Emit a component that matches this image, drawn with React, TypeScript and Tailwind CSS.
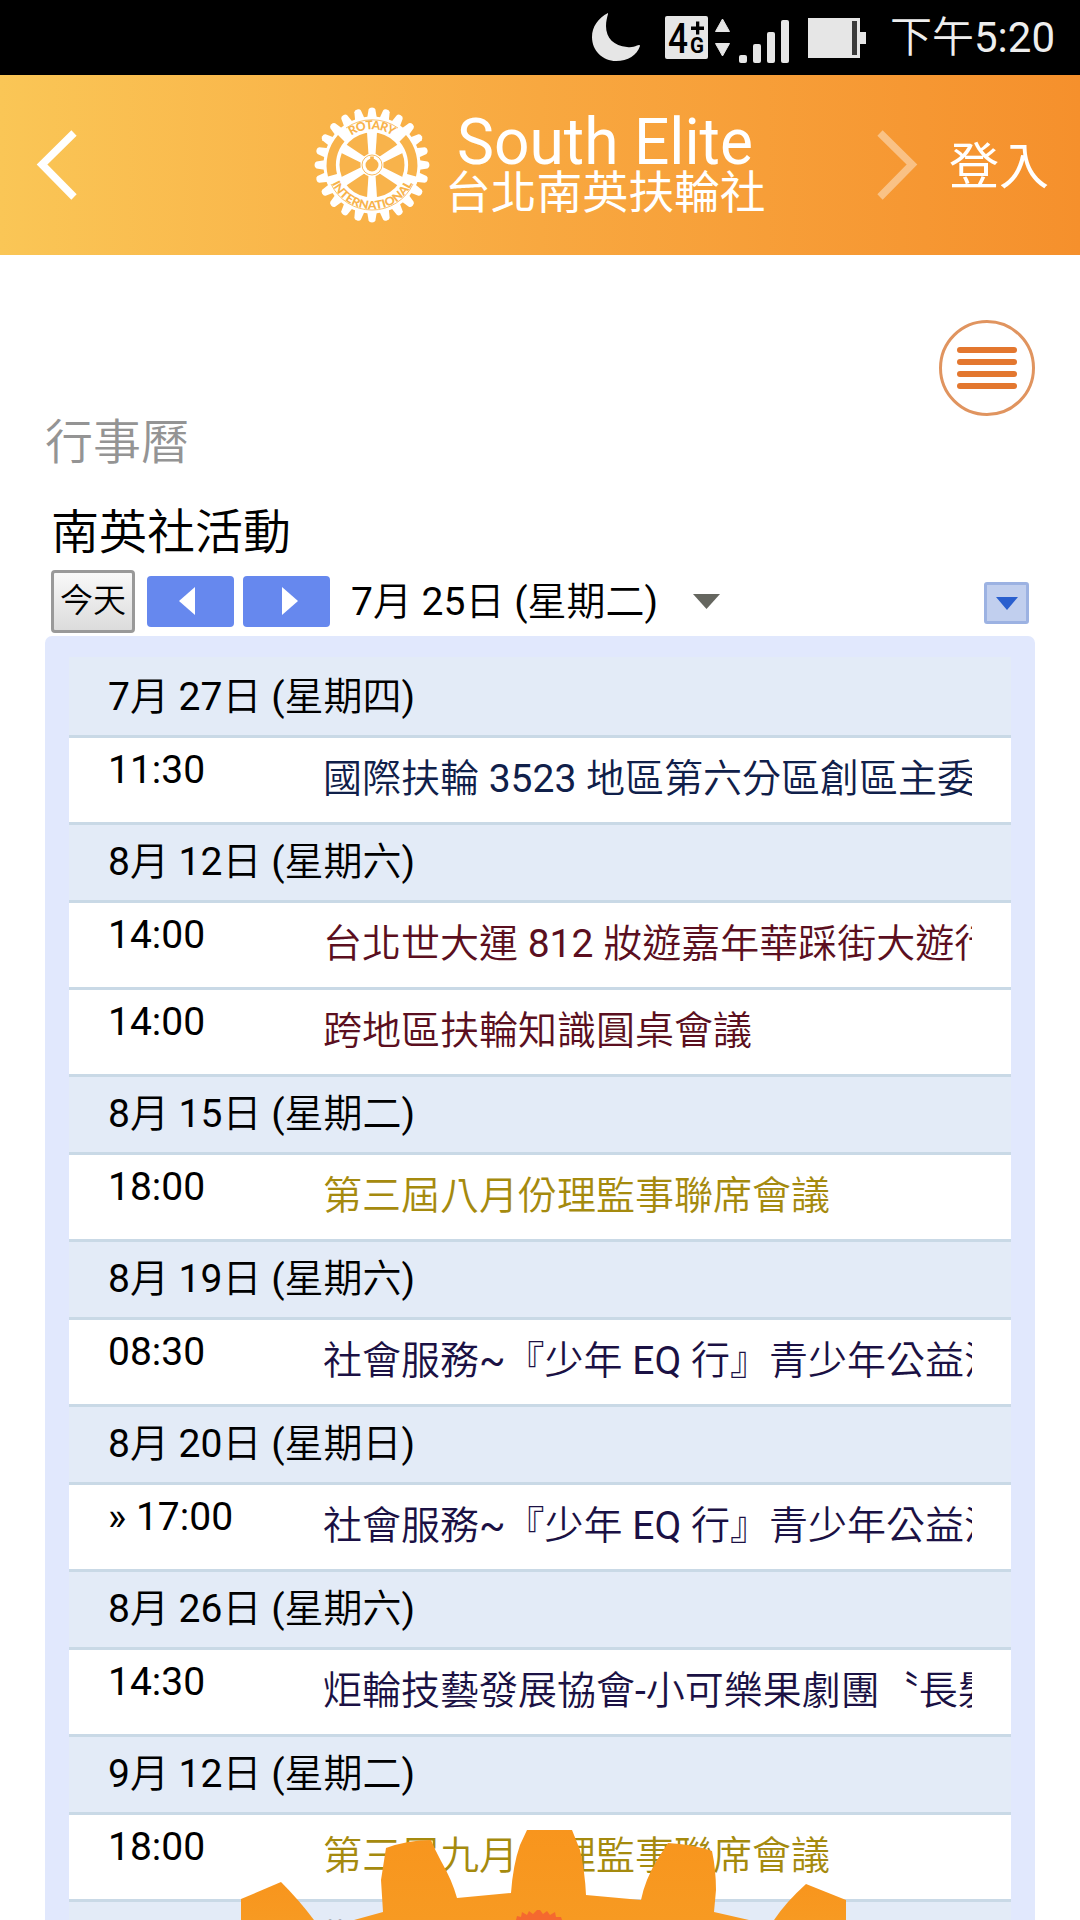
import React from "react";

const cjk = "font-['Roboto','Noto_Sans_CJK_TC',sans-serif]";

type Row = { day: string } | { time: string; title: string; color: string };

const navy = "text-[#10204a]";
const wine = "text-[#5b0f20]";
const gold = "text-[#a58a0e]";
const indigo = "text-[#1b1144]";

const rows: Row[] = [
  { day: "7月 27日 (星期四)" },
  { time: "11:30", title: "國際扶輪 3523 地區第六分區創區主委", color: navy },
  { day: "8月 12日 (星期六)" },
  { time: "14:00", title: "台北世大運 812 妝遊嘉年華踩街大遊行", color: wine },
  { time: "14:00", title: "跨地區扶輪知識圓桌會議", color: wine },
  { day: "8月 15日 (星期二)" },
  { time: "18:00", title: "第三屆八月份理監事聯席會議", color: gold },
  { day: "8月 19日 (星期六)" },
  { time: "08:30", title: "社會服務~『少年 EQ 行』青少年公益活動", color: indigo },
  { day: "8月 20日 (星期日)" },
  { time: "» 17:00", title: "社會服務~『少年 EQ 行』青少年公益活動", color: indigo },
  { day: "8月 26日 (星期六)" },
  { time: "14:30", title: "炬輪技藝發展協會-小可樂果劇團〝長髮", color: indigo },
  { day: "9月 12日 (星期二)" },
  { time: "18:00", title: "第三屆九月份理監事聯席會議", color: gold },
  { day: "9月 16日 (星期六)" },
];

/** Sets Chinese characters in the demi-light weight and Latin ones in regular. */
function Mixed({ text }: { text: string }) {
  return (
    <>
      {text.split(/([^\x00-\x7f]+)/).map((part, i) =>
        i % 2 ? (
          <span key={i} className="font-[350]">{part}</span>
        ) : (
          part
        )
      )}
    </>
  );
}

function StatusBar() {
  return (
    <div className="flex h-[75px] items-center bg-black pl-[590px]">
      <svg width="290" height="75" viewBox="590 0 290 75" className="shrink-0" fill="#e6e6e6">
        <path d="M608 13C598 18 592 27 592 37C592 51 603 61 616 61C628 61 637 55 640 46C640 45 639 44.500 637 45.500C634 47 631 47.500 627 47C614 46 606 38 606 26C606 21 607 18 608 14Z" />
        <rect x="665" y="16" width="43" height="43" rx="2" />
        <text x="668" y="53" fontFamily="Roboto" fontSize="43" fontWeight="500" fill="#000" textLength="20" lengthAdjust="spacingAndGlyphs">4</text>
        <text x="690" y="53" fontFamily="Roboto" fontSize="22" fontWeight="700" fill="#000" textLength="14" lengthAdjust="spacingAndGlyphs">G</text>
        <path d="M691 26.500h13v3.500h-13zM696 21.500h3.300v13h-3.300z" fill="#000" />
        <path d="M722.500 19L729.500 31.500H715.500ZM722.500 56L729.500 43.500H715.500Z" stroke="#e6e6e6" strokeWidth="1" strokeLinejoin="round" />
        <rect x="739" y="55" width="8" height="8" rx="2" />
        <rect x="753" y="44" width="8" height="19" rx="2" />
        <rect x="767" y="32" width="8" height="31" rx="2" />
        <rect x="781" y="20" width="8" height="43" rx="2" />
        <path d="M808 18h52v14h6v12h-6v14h-52z" />
        <rect x="852" y="21" width="5" height="34" fill="#3a3a3a" />
      </svg>
      <span className="ml-[10px] whitespace-nowrap text-[42px] leading-[75px] text-[#eeeeee]"><Mixed text="下午5:20" /></span>
    </div>
  );
}

function RotaryWheel() {
  const teeth = Array.from({ length: 24 }, (_, i) => i * 15);
  const spokes = [0, 60, 120, 180, 240, 300];
  const o = "#f8b34b";
  return (
    <svg width="116" height="116" viewBox="-58 -58 116 116" className="shrink-0">
      <circle r="48.500" fill="#fff" />
      {teeth.map((a) => (
        <path key={a} d="M-5 -46L-3.400 -55.500Q-2.800 -57.500 0 -57.500Q2.800 -57.500 3.400 -55.500L5 -46Z" fill="#fff" transform={`rotate(${a})`} />
      ))}
      <path d="M-34 -30A45.500 45.500 0 0 0 -44 11.500L-35 9A36.300 36.300 0 0 1 -27.500 -23.500Z" fill={o} />
      <path d="M34 -30A45.500 45.500 0 0 1 44 11.500L35 9A36.300 36.300 0 0 0 27.500 -23.500Z" fill={o} />
      <path d="M-26 -37A45.300 45.300 0 0 1 26 -37" fill="none" stroke={o} strokeWidth=".8" />
      <path d="M-41 19A45.300 45.300 0 0 0 41 19" fill="none" stroke={o} strokeWidth=".8" />
      <circle r="32.500" fill={o} />
      {spokes.map((a) => (
        <path key={a} d="M-3.500 -10L-5 -33H5L3.500 -10Z" fill="#fff" transform={`rotate(${a})`} />
      ))}
      <circle r="11.500" fill="#fff" />
      <circle r="10" fill="none" stroke={o} strokeWidth=".9" />
      <circle r="6.500" fill={o} />
      <path d="M-1.800 -8.500h3.600v3h-3.600z" fill={o} />
      <defs>
        <path id="arc-top" d="M-35.800 0A35.800 35.800 0 0 1 35.800 0" />
        <path id="arc-bottom" d="M-44.300 0A44.300 44.300 0 0 0 44.300 0" />
      </defs>
      <text fill={o} fontFamily="Lato" fontWeight="900" fontSize="12" textAnchor="middle">
        <textPath href="#arc-top" startOffset="50%" textLength="44">ROTARY</textPath>
      </text>
      <text fill={o} fontFamily="Lato" fontWeight="900" fontSize="11.500" textAnchor="middle">
        <textPath href="#arc-bottom" startOffset="50%" textLength="101" lengthAdjust="spacingAndGlyphs">INTERNATIONAL</textPath>
      </text>
    </svg>
  );
}

function Header() {
  return (
    <header className="flex h-[180px] items-center bg-gradient-to-r from-[#fac656] via-[#f8a840] to-[#f5902c] text-white">
      <svg width="44" height="72" viewBox="0 0 44 72" className="ml-[34px] shrink-0">
        <path d="M40 4L8 35.500L40 68" fill="none" stroke="#fff" strokeWidth="7.500" />
      </svg>
      <div className="ml-[236px] flex items-center">
        <RotaryWheel />
        <div className="ml-[15px] flex w-[322px] flex-col">
          <svg width="320" height="58" viewBox="0 0 320 58">
            <text x="12" y="52.500" fontFamily="Roboto" fontSize="64" fill="#fff" textLength="296" lengthAdjust="spacingAndGlyphs">South Elite</text>
          </svg>
          <div className="h-[50px] whitespace-nowrap text-[45.800px] leading-[50px]">台北南英扶輪社</div>
        </div>
      </div>
      <svg width="44" height="72" viewBox="0 0 44 72" className="ml-[108px] shrink-0 opacity-40">
        <path d="M5 4L37 35.500L5 68" fill="none" stroke="#fff" strokeWidth="7.500" />
      </svg>
      <div className="ml-[30px] whitespace-nowrap pt-1 text-[50px] leading-[60px]">登入</div>
    </header>
  );
}

function CalendarToolbar() {
  return (
    <div className="flex h-[68px] items-center pb-[2px] pl-[51px] pr-[51px] text-black">
      <button className="h-[63px] w-[84px] shrink-0 whitespace-nowrap rounded-[4px] border-[3px] border-[#999] bg-gradient-to-b from-[#f8f8f8] to-[#dcdcdc] text-[33px] font-[350] leading-[50px]">今天</button>
      <button className="ml-3 flex h-[51px] w-[87px] shrink-0 items-center justify-center rounded-[4px] bg-[#6688ee]">
        <svg width="16" height="28" viewBox="0 0 16 28" className="mr-[7px]"><path d="M16 0V28L0 14Z" fill="#fff" /></svg>
      </button>
      <button className="ml-[9px] flex h-[51px] w-[87px] shrink-0 items-center justify-center rounded-[4px] bg-[#6688ee]">
        <svg width="16" height="28" viewBox="0 0 16 28" className="ml-[6px]"><path d="M0 0V28L16 14Z" fill="#fff" /></svg>
      </button>
      <span className="ml-[21px] whitespace-nowrap pt-[2px] text-[39px] leading-[60px]"><Mixed text="7月 25日 (星期二)" /></span>
      <svg width="27" height="15" viewBox="0 0 27 15" className="ml-[35px] shrink-0"><path d="M0 0H27L13.500 15Z" fill="#65665f" /></svg>
      <button className="ml-auto mt-[4px] flex h-[42px] w-[45px] items-center justify-center rounded-[3px] border-[3px] border-[#9cb2e2] bg-[#c1cfee]">
        <svg width="22" height="13" viewBox="0 0 22 13"><path d="M0 0H22L11 13Z" fill="#2a5fce" /></svg>
      </button>
    </div>
  );
}

function Agenda() {
  return (
    <div className="h-[1284px] overflow-hidden rounded-t-[7px] bg-[#e1e8fd] px-6 pt-[21px]">
      {rows.map((r, i) =>
        "day" in r ? (
          <div key={i} className="h-[78px] border-t-[3px] border-[#c9d9e6] bg-[#e3ebf7] pl-[39px] text-[39px] leading-[74px] text-black first:border-[#e3ebf7]">
            <Mixed text={r.day} />
          </div>
        ) : (
          <div key={i} className="flex h-[87px] border-t-[3px] border-[#c9d9e6] bg-white pl-[39px] text-[39px]">
            <div className="w-[215px] shrink-0 whitespace-nowrap leading-[64px] text-black">{r.time}</div>
            <div className={`w-[649px] overflow-hidden whitespace-nowrap leading-[83px] ${r.color}`}><Mixed text={r.title} /></div>
          </div>
        )
      )}
    </div>
  );
}

function GearButton() {
  return (
    <svg width="620" height="96" viewBox="235 1824 620 96" className="absolute bottom-0 left-[235px]">
      <defs>
        <linearGradient id="gear" x1="0" y1="0" x2="0" y2="1">
          <stop offset="0" stopColor="#f8951d" />
          <stop offset="1" stopColor="#f79a22" />
        </linearGradient>
      </defs>
      <g fill="url(#gear)">
        <path d="M354 1920L383 1912L381 1880L386 1848Q408 1840 431 1840Q435 1850 441 1861Q452 1880 457 1898L511 1893Q513 1865 520 1845L527 1830H572L580 1850Q585 1872 586 1895L641 1900Q645 1880 657 1860L668 1843Q692 1844 712 1851Q716 1870 716 1890L714 1912L749 1920Z" />
        <path d="M241 1920V1899L281 1882Q299 1900 314 1920Z" />
        <path d="M846 1920V1900L806 1884Q786 1902 774 1920Z" />
      </g>
      <path d="M516 1920L517 1916L521 1917L522 1912L527 1915L529 1911L533 1914L537 1910L540 1910L543 1914L547 1911L550 1915L555 1912L556 1917L561 1917L562 1920Z" fill="#f5692f" />
    </svg>
  );
}

export default function App() {
  return (
    <div className={`relative h-[1920px] w-[1080px] overflow-hidden bg-white ${cjk}`}>
      <StatusBar />
      <Header />
      <main>
        <div className="flex h-[164px] justify-end pr-[45px] pt-[65px]">
          <button className="flex h-24 w-24 flex-col items-center justify-center gap-[6px] rounded-full border-[3px] border-[#e0945f]">
            <i className="h-[6px] w-[60px] rounded-full bg-[#e3772f]" />
            <i className="h-[6px] w-[60px] rounded-full bg-[#e3772f]" />
            <i className="h-[6px] w-[60px] rounded-full bg-[#e3772f]" />
            <i className="h-[6px] w-[60px] rounded-full bg-[#e3772f]" />
          </button>
        </div>
        <h1 className="h-[90px] pl-[45px] text-[48px] font-[350] leading-[48px] text-[#949494]">行事曆</h1>
        <h2 className="h-[59px] pl-[51px] text-[48px] font-[350] leading-[48px] text-black">南英社活動</h2>
        <CalendarToolbar />
        <div className="ml-[45px] w-[990px]">
          <Agenda />
        </div>
      </main>
      <GearButton />
    </div>
  );
}
